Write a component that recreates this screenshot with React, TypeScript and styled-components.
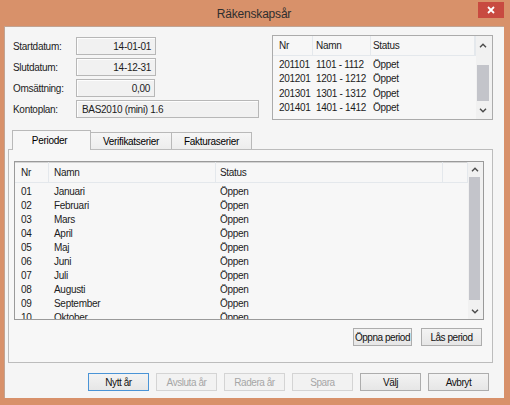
import React from "react";
import styled, {createGlobalStyle} from "styled-components";

const GlobalStyle = createGlobalStyle`
  html, body {
    margin: 0;
    padding: 0;
  }
  body {
    background: #d8916a;
    font-family: "Liberation Sans", Arial, sans-serif;
    font-size: 10px;
    color: #1c1c1c;
  }
`
const Window = styled.div`
  width: 510px;
  height: 405px;
  box-sizing: border-box;
  background: #d8916a;
  padding: 0 6px 7px 4px;
  display: flex;
  flex-direction: column;
`
const TitleBar = styled.div`
  height: 26px;
  flex-shrink: 0;
  display: grid;
  grid-template-columns: 1fr auto 1fr;

  > .title {
    font-size: 12px;
    letter-spacing: -0.2px;
    color: #2e2e2e;
    line-height: 28px;
  }
`
const CloseButton = styled.div`
  justify-self: end;
  margin-top: 2px;
  width: 26px;
  height: 16px;
  background: #c84a40;
  display: flex;
  align-items: center;
  justify-content: center;
`
const Client = styled.div`
  flex: 1;
  background: #f5f5f5;
  box-shadow: inset 1px 1px 0 #c2a493;
  display: flex;
  flex-direction: column;
`
const TopRow = styled.div`
  display: flex;
  justify-content: space-between;
  padding: 9px 11px 0 9px;
  height: 85px;
`
const Form = styled.div`
  margin-top: 2px;
  display: grid;
  grid-template-columns: 63px auto;
  grid-auto-rows: 18px;
  row-gap: 3px;
  align-items: center;
  align-content: start;
  letter-spacing: -0.3px;
`
const Field = styled.div<{ $w: number; $left?: boolean }>`
  width: ${p => p.$w}px;
  height: 18px;
  box-sizing: border-box;
  border: 1px solid #b7b7b7;
  box-shadow: inset 1px 1px 0 #fdfdfd;
  background: #f1f1f1;
  display: flex;
  align-items: center;
  justify-content: ${p => p.$left ? 'flex-start' : 'flex-end'};
  padding: 0 4px 0 5px;
`
const ListBox = styled.div<{ $w: number; $h: number; $dark?: boolean }>`
  width: ${p => p.$w}px;
  height: ${p => p.$h}px;
  box-sizing: border-box;
  border: 1px solid ${p => p.$dark ? '#9a9a9a' : '#ababab'};
  box-shadow: ${p => p.$dark ? 'inset 0 1px 0 #d4d4d4' : 'none'};
  background: #f7f7f7;
  display: flex;
  overflow: hidden;
  flex-shrink: 0;
`
const ListBody = styled.div`
  flex: 1;
  display: flex;
  flex-direction: column;
  overflow: hidden;
  letter-spacing: -0.3px;
`
const HeadRow = styled.div<{ $h: number }>`
  display: flex;
  height: ${p => p.$h}px;
  box-sizing: border-box;
  border-bottom: 1px solid #e4e8ec;
  flex-shrink: 0;
`
const HeadCell = styled.div<{ $w?: number; $pad: number }>`
  ${p => p.$w ? `width: ${p.$w}px;` : 'flex: 1;'}
  box-sizing: border-box;
  padding-left: ${p => p.$pad}px;
  border-right: 1px solid #e4e8ec;
  display: flex;
  align-items: center;
`
const Rows = styled.div<{ $top: number }>`
  padding-top: ${p => p.$top}px;
`
const Row = styled.div<{ $h: number }>`
  display: flex;
  height: ${p => p.$h}px;
  align-items: center;
  white-space: nowrap;
`
const Cell = styled.div<{ $w?: number; $pad: number }>`
  ${p => p.$w ? `width: ${p.$w}px;` : 'flex: 1;'}
  box-sizing: border-box;
  padding-left: ${p => p.$pad}px;
`
const ScrollBar = styled.div<{ $w: number; $end?: boolean; $btn: number }>`
  width: ${p => p.$w}px;
  flex-shrink: 0;
  display: flex;
  flex-direction: column;
  background: #f1f1f1;

  > .btn {
    height: ${p => p.$btn}px;
    display: flex;
    align-items: center;
    justify-content: center;
    flex-shrink: 0;
    padding-right: 2px;
  }

  > .track {
    flex: 1;
    display: flex;
    flex-direction: column;
    justify-content: ${p => p.$end ? 'flex-end' : 'flex-start'};
  }
`
const Thumb = styled.div<{ $h: number }>`
  height: ${p => p.$h}px;
  margin: 0 3px 0 1px;
  background: #c3c4ca;
`
const TabStrip = styled.div`
  display: flex;
  align-items: flex-end;
  height: 20px;
  margin-top: 10px;
  padding-left: 8px;
`
const Tab = styled.div<{ $w: number; $active?: boolean }>`
  width: ${p => p.$w}px;
  height: ${p => p.$active ? 20 : 18}px;
  box-sizing: border-box;
  border-top: 1px solid #b9b9b9;
  border-right: 1px solid #b9b9b9;
  background: ${p => p.$active ? '#f7f7f7' : 'linear-gradient(#f6f6f6, #ececec)'};
  position: ${p => p.$active ? 'relative' : 'static'};
  z-index: ${p => p.$active ? 1 : 'auto'};
  display: flex;
  justify-content: center;
  padding-top: ${p => p.$active ? 4 : 3}px;
  padding-right: ${p => p.$active ? 4 : 0}px;
  color: #000;
  letter-spacing: -0.3px;

  &:first-child {
    border-left: 1px solid #b9b9b9;
  }
`
const Panel = styled.div`
  margin: -1px 11px 0 4px;
  height: 214px;
  box-sizing: border-box;
  border: 1px solid #bcbcbc;
  background: #f7f7f7;
  padding: 11px 8px 0 5px;
  display: flex;
  flex-direction: column;
`
const ButtonRow = styled.div<{ $gap: number; $right: number; $top: number }>`
  display: flex;
  justify-content: flex-end;
  gap: ${p => p.$gap}px;
  padding-right: ${p => p.$right}px;
  margin-top: ${p => p.$top}px;
`
const Button = styled.button<{ $w?: number; $primary?: boolean }>`
  width: ${p => p.$w || 61}px;
  height: 18px;
  box-sizing: border-box;
  padding: 0;
  font-family: inherit;
  font-size: 10px;
  letter-spacing: -0.45px;
  white-space: nowrap;
  color: #111;
  border: 1px solid ${p => p.$primary ? '#4a94d6' : '#adadad'};
  background: linear-gradient(#f3f3f3, #e6e6e6);

  &:disabled {
    color: #a6a6a6;
    border-color: #d4d4d4;
    background: #f2f2f2;
  }
`

const Arrow: React.FC<{ up?: boolean }> = ({up}) => (
    <svg width="8" height="5" viewBox="0 0 8 5">
        <path d={up ? "M1 4.2 L4 1.2 L7 4.2" : "M1 0.8 L4 3.8 L7 0.8"} fill="none" stroke="#4a4a4a" strokeWidth="1.4"/>
    </svg>
)

type Col = { w?: number, pad: number }
const yearCols: Col[] = [{w: 40, pad: 6}, {w: 58, pad: 3}, {w: 104, pad: 2}, {pad: 0}]
const periodCols: Col[] = [{w: 34, pad: 6}, {w: 167, pad: 5}, {w: 227, pad: 4}, {pad: 0}]

const years = [
    ['201101', '1101 - 1112', 'Öppet'],
    ['201201', '1201 - 1212', 'Öppet'],
    ['201301', '1301 - 1312', 'Öppet'],
    ['201401', '1401 - 1412', 'Öppet'],
]
const months = ['Januari', 'Februari', 'Mars', 'April', 'Maj', 'Juni', 'Juli', 'Augusti', 'September', 'Oktober', 'November', 'December']
const periods = months.map((m, i) => [String(i + 1).padStart(2, '0'), m, 'Öppen'])

const App: React.FC = () => {
    return (
        <Window>
            <GlobalStyle/>
            <TitleBar>
                <span/>
                <span className="title">Räkenskapsår</span>
                <CloseButton>
                    <svg width="8" height="8" viewBox="0 0 8 8">
                        <path d="M1 1 L7 7 M7 1 L1 7" stroke="#fff" strokeWidth="1.8"/>
                    </svg>
                </CloseButton>
            </TitleBar>
            <Client>
                <TopRow>
                    <Form>
                        <span>Startdatum:</span>
                        <Field $w={80}>14-01-01</Field>
                        <span>Slutdatum:</span>
                        <Field $w={80}>14-12-31</Field>
                        <span>Omsättning:</span>
                        <Field $w={79}>0,00</Field>
                        <span>Kontoplan:</span>
                        <Field $w={183} $left>BAS2010 (mini) 1.6</Field>
                    </Form>
                    <ListBox $w={221} $h={85}>
                        <ListBody>
                            <HeadRow $h={20}>
                                <HeadCell $w={40} $pad={6}>Nr</HeadCell>
                                <HeadCell $w={58} $pad={3}>Namn</HeadCell>
                                <HeadCell $w={104} $pad={2}>Status</HeadCell>
                                <HeadCell $pad={0}/>
                            </HeadRow>
                            <Rows $top={1}>
                                {years.map(r => (
                                    <Row key={r[0]} $h={14.5}>
                                        {r.map((v, i) => <Cell key={i} $w={yearCols[i].w} $pad={yearCols[i].pad}>{v}</Cell>)}
                                    </Row>
                                ))}
                            </Rows>
                        </ListBody>
                        <ScrollBar $w={16} $btn={18} $end>
                            <div className="btn"><Arrow up/></div>
                            <div className="track"><Thumb $h={36}/></div>
                            <div className="btn"><Arrow/></div>
                        </ScrollBar>
                    </ListBox>
                </TopRow>

                <TabStrip>
                    <Tab $w={79} $active>Perioder</Tab>
                    <Tab $w={81}>Verifikatserier</Tab>
                    <Tab $w={80}>Fakturaserier</Tab>
                </TabStrip>
                <Panel>
                    <ListBox $w={470} $h={159} $dark>
                        <ListBody>
                            <HeadRow $h={21}>
                                <HeadCell $w={34} $pad={6}>Nr</HeadCell>
                                <HeadCell $w={167} $pad={5}>Namn</HeadCell>
                                <HeadCell $w={227} $pad={4}>Status</HeadCell>
                                <HeadCell $pad={0}/>
                            </HeadRow>
                            <Rows $top={1}>
                                {periods.map(r => (
                                    <Row key={r[0]} $h={14}>
                                        {r.map((v, i) => <Cell key={i} $w={periodCols[i].w} $pad={periodCols[i].pad}>{v}</Cell>)}
                                    </Row>
                                ))}
                            </Rows>
                        </ListBody>
                        <ScrollBar $w={15} $btn={15}>
                            <div className="btn"><Arrow up/></div>
                            <div className="track"><Thumb $h={123}/></div>
                            <div className="btn"><Arrow/></div>
                        </ScrollBar>
                    </ListBox>
                    <ButtonRow $gap={9} $right={2} $top={8}>
                        <Button $w={59}>Öppna period</Button>
                        <Button $w={61}>Lås period</Button>
                    </ButtonRow>
                </Panel>

                <ButtonRow $gap={7} $right={15} $top={10}>
                    <Button $primary>Nytt år</Button>
                    <Button disabled>Avsluta år</Button>
                    <Button disabled>Radera år</Button>
                    <Button disabled>Spara</Button>
                    <Button>Välj</Button>
                    <Button>Avbryt</Button>
                </ButtonRow>
            </Client>
        </Window>
    )
}

export default App
